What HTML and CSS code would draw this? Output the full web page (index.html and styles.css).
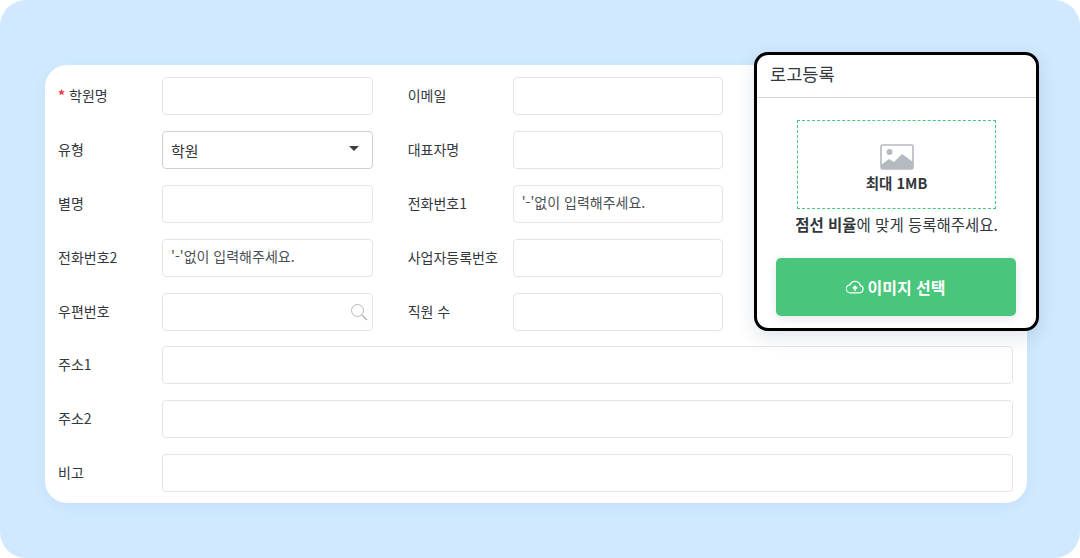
FILE: index.html
```html
<!DOCTYPE html>
<html lang="ko">
	<head>
		<meta charset="utf-8">
		<title>로고등록</title>
		<link rel="stylesheet" href="styles.css">
	</head>
	<body>
		<div class="stage">
			<div class="form-card">
				<div class="form-row">
					<label class="form-label"><span class="required">*</span> 학원명</label>
					<div class="form-input"></div>
					<label class="form-label second">이메일</label>
					<div class="form-input"></div>
				</div>
				<div class="form-row">
					<label class="form-label">유형</label>
					<div class="form-input select">
						<span>학원</span>
						<span class="select-arrow"></span>
					</div>
					<label class="form-label second">대표자명</label>
					<div class="form-input"></div>
				</div>
				<div class="form-row">
					<label class="form-label">별명</label>
					<div class="form-input"></div>
					<label class="form-label second">전화번호1</label>
					<div class="form-input placeholder">'-'없이 입력해주세요.</div>
				</div>
				<div class="form-row">
					<label class="form-label">전화번호2</label>
					<div class="form-input placeholder">'-'없이 입력해주세요.</div>
					<label class="form-label second">사업자등록번호</label>
					<div class="form-input"></div>
				</div>
				<div class="form-row row-tight">
					<label class="form-label">우편번호</label>
					<div class="form-input search">
						<svg width="18" height="18" viewBox="0 0 18 18" fill="none" stroke="#b4b8bd">
							<circle cx="7.5" cy="7.5" r="6" stroke-width="1"/>
							<path d="M12 12l5 5" stroke-width="1.6"/>
						</svg>
					</div>
					<label class="form-label second">직원 수</label>
					<div class="form-input"></div>
				</div>
				<div class="form-row">
					<label class="form-label">주소1</label>
					<div class="form-input wide"></div>
				</div>
				<div class="form-row">
					<label class="form-label">주소2</label>
					<div class="form-input wide"></div>
				</div>
				<div class="form-row">
					<label class="form-label">비고</label>
					<div class="form-input wide"></div>
				</div>
			</div>

			<div class="logo-popup">
				<div class="logo-title">로고등록</div>
				<div class="logo-body">
					<div class="drop-box">
						<svg width="34" height="26" viewBox="0 0 34 26">
							<rect x="1" y="1" width="32" height="24" rx="1.5" fill="#fff" stroke="#b5bac0" stroke-width="1.6"/>
							<circle cx="9.5" cy="8" r="3" fill="#b5bac0"/>
							<path d="M1 21l8-6 5 3 8-8 11 8v7H1z" fill="#b5bac0"/>
						</svg>
						<div class="drop-text">최대 1MB</div>
					</div>
					<p class="logo-hint"><b>점선 비율</b>에 맞게 등록해주세요.</p>
					<div class="logo-button">
						<svg width="18" height="14" viewBox="0 0 18 14" fill="none" stroke="#fff" stroke-width="1.2">
							<path d="M4.5 12.8h9.2a3.6 3.6 0 0 0 .6-7.1A5.4 5.4 0 0 0 4 4.8a4 4 0 0 0 .5 8z"/>
							<path d="M9 11V6.5M6.8 8.4L9 6.2l2.2 2.2" stroke-width="1.5"/>
						</svg>
						<span>이미지 선택</span>
					</div>
				</div>
			</div>
		</div>
	</body>
</html>
```

FILE: styles.css
```css
html, body
{
	margin: 0;
	background-color: #FFFFFF;
}

body
{
	font-family: "Noto Sans CJK KR", "Noto Sans", sans-serif;
	font-size: 14px;
	color: #33383d;
}

.stage
{
	position: relative;
	box-sizing: border-box;
	width: 1080px;
	height: 558px;
	padding: 65px 53px 55px 45px;
	background-color: #D0E9FE;
	border-radius: 26px;
	overflow: hidden;
}

.form-card
{
	display: flex;
	flex-direction: column;
	gap: 16px;
	box-sizing: border-box;
	height: 438px;
	padding: 12px 14px 0 13px;
	background-color: #FFFFFF;
	border-radius: 22px;
	box-shadow: 0 4px 14px rgba(120, 170, 220, 0.12);
}

.form-row
{
	display: flex;
	align-items: center;
	height: 38px;
}

.row-tight
{
	margin-bottom: -1px;
}

.form-label
{
	width: 104px;
	flex: none;
	line-height: 20px;
	margin-top: -2px;
}

.form-label.second
{
	width: 105px;
	margin-left: 35.2px;
}

.required
{
	font-weight: 700;
	color: #f5333f;
}

.form-input
{
	display: flex;
	align-items: center;
	box-sizing: border-box;
	width: 210.5px;
	height: 38px;
	padding: 0 8px;
	background-color: #FFFFFF;
	border: 1px solid #e2e4e8;
	border-radius: 4px;
}

.form-input.wide
{
	width: 851px;
}

.form-input.select
{
	justify-content: space-between;
	padding-right: 13px;
	border-color: #c9d0d8;
	font-size: 15px;
	color: #33383d;
}

.select-arrow
{
	width: 0;
	height: 0;
	margin-top: -3px;
	border-left: 5px solid transparent;
	border-right: 5px solid transparent;
	border-top: 5px solid #3a3f45;
}

.form-input.placeholder
{
	padding-bottom: 4px;
	color: #4a4f55;
}

.form-input.search
{
	justify-content: flex-end;
	padding-right: 4px;
}

.logo-popup
{
	position: absolute;
	left: 754px;
	top: 52px;
	box-sizing: border-box;
	width: 285px;
	height: 279px;
	background-color: #FFFFFF;
	border: 3px solid #000000;
	border-radius: 14px;
	box-shadow: 0 6px 18px rgba(60, 90, 130, 0.16);
}

.logo-title
{
	box-sizing: border-box;
	height: 43px;
	padding: 5px 0 0 13px;
	border-bottom: 1px solid #d3d8dc;
	font-size: 17.6px;
	line-height: 28px;
	color: #33383d;
}

.logo-body
{
	display: flex;
	flex-direction: column;
	align-items: center;
}

.drop-box
{
	display: flex;
	flex-direction: column;
	align-items: center;
	box-sizing: border-box;
	width: 199px;
	height: 89px;
	margin-top: 22px;
	padding-top: 23px;
	border: 1px dashed #48c77c;
}

.drop-text
{
	margin-top: 3px;
	font-size: 14.5px;
	line-height: 20px;
	font-weight: 700;
	color: #33383d;
}

.logo-hint
{
	margin: 3px 0 0 0;
	font-size: 15.5px;
	line-height: 24px;
	color: #33383d;
}

.logo-hint b
{
	font-weight: 700;
}

.logo-button
{
	display: flex;
	align-items: center;
	justify-content: center;
	gap: 3px;
	box-sizing: border-box;
	width: 240px;
	height: 58px;
	margin: 22px 1px 0 0;
	padding-bottom: 1px;
	background-color: #48C77C;
	border-radius: 5px;
	box-shadow: 0 3px 10px rgba(60, 90, 130, 0.14);
	font-size: 16px;
	font-weight: 700;
	color: #FFFFFF;
}
```
